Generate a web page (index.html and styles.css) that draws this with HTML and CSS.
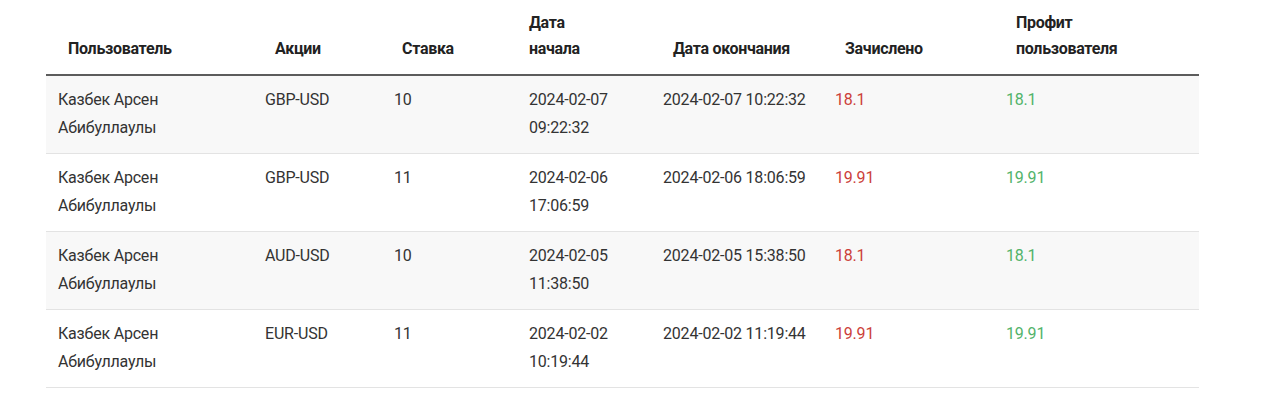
FILE: index.html
```html
<!DOCTYPE html>
<html lang="ru">
<head>
<meta charset="utf-8">
<title>Сделки</title>
<link rel="stylesheet" href="styles.css">
</head>
<body>
<div class="wrap">
<table class="deals">
  <colgroup>
    <col class="c1"><col class="c2"><col class="c3"><col class="c4"><col class="c5"><col class="c6"><col class="c7">
  </colgroup>
  <thead>
    <tr>
      <th>Пользователь</th>
      <th>Акции</th>
      <th class="narrow">Ставка</th>
      <th class="flush">Дата<br>начала</th>
      <th>Дата окончания</th>
      <th>Зачислено</th>
      <th>Профит<br>пользователя</th>
    </tr>
  </thead>
  <tbody>
    <tr>
      <td>Казбек Арсен<br>Абибуллаулы</td>
      <td>GBP-USD</td>
      <td>10</td>
      <td>2024-02-07<br>09:22:32</td>
      <td>2024-02-07 10:22:32</td>
      <td class="neg">18.1</td>
      <td class="pos">18.1</td>
    </tr>
    <tr>
      <td>Казбек Арсен<br>Абибуллаулы</td>
      <td>GBP-USD</td>
      <td>11</td>
      <td>2024-02-06<br>17:06:59</td>
      <td>2024-02-06 18:06:59</td>
      <td class="neg">19.91</td>
      <td class="pos">19.91</td>
    </tr>
    <tr>
      <td>Казбек Арсен<br>Абибуллаулы</td>
      <td>AUD-USD</td>
      <td>10</td>
      <td>2024-02-05<br>11:38:50</td>
      <td>2024-02-05 15:38:50</td>
      <td class="neg">18.1</td>
      <td class="pos">18.1</td>
    </tr>
    <tr>
      <td>Казбек Арсен<br>Абибуллаулы</td>
      <td>EUR-USD</td>
      <td>11</td>
      <td>2024-02-02<br>10:19:44</td>
      <td>2024-02-02 11:19:44</td>
      <td class="neg">19.91</td>
      <td class="pos">19.91</td>
    </tr>
  </tbody>
</table>
</div>
</body>
</html>
```

FILE: styles.css
```css
html, body {
  margin: 0;
  padding: 0;
  background: #ffffff;
}

.wrap {
  padding-left: 46px;
}

.deals {
  width: 1153px;
  table-layout: fixed;
  border-collapse: collapse;
  font-family: Roboto, "Noto Sans", "Liberation Sans", sans-serif;
  font-stretch: 95%;
  font-size: 16px;
  letter-spacing: -0.2px;
  color: #333333;
}

.c1 { width: 207px; }
.c2 { width: 129px; }
.c3 { width: 135px; }
.c4 { width: 134px; }
.c5 { width: 172px; }
.c6 { width: 171px; }
.c7 { width: 205px; }

.deals th {
  text-align: left;
  font-weight: 700;
  letter-spacing: -0.3px;
  color: #222222;
  line-height: 26px;
  padding: 10px 12px 12px 22px;
  vertical-align: bottom;
  border-bottom: 2px solid #5c5c5c;
  white-space: nowrap;
}

.deals th.narrow { padding-left: 20px; }
.deals th.flush { padding-left: 12px; }

.deals td {
  text-align: left;
  line-height: 28px;
  padding: 10px 12px 11px;
  vertical-align: top;
  border-bottom: 1px solid #e3e3e3;
  white-space: nowrap;
}

.deals tbody tr:nth-child(odd) td {
  background: #f8f8f8;
}

.neg { color: #cc3f3a; }
.pos { color: #52b36a; }
```
